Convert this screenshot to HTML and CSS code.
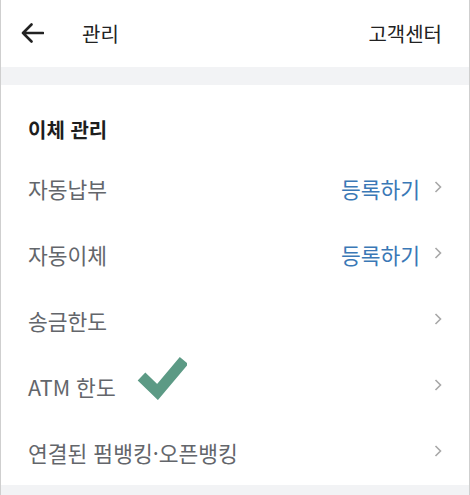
FILE: index.html
```html
<!DOCTYPE html>
<html lang="ko">
<head>
  <meta charset="UTF-8">
  <meta name="viewport" content="width=device-width, initial-scale=1.0">
  <title>관리</title>
  <link rel="stylesheet" href="styles.css">
</head>
<body>
  <div class="screen">
    <header class="topbar">
      <a href="#" class="back" aria-label="뒤로">
        <svg width="24" height="24" viewBox="0 0 24 24">
          <path d="M23 12H3M11.5 3.5L3 12l8.5 8.5" fill="none" stroke="#222" stroke-width="2.6" stroke-linecap="round" stroke-linejoin="round"/>
        </svg>
      </a>
      <span class="page-title">관리</span>
      <a href="#" class="help">고객센터</a>
    </header>

    <div class="divider"></div>

    <section class="menu">
      <h3 class="menu-title">이체 관리</h3>

      <a href="#" class="row">
        <span class="label">자동납부</span>
        <span class="action">등록하기</span>
        <svg class="chev" width="8" height="12" viewBox="0 0 8 12"><path d="M1.5 1l5 5-5 5" fill="none" stroke="#a8a8a8" stroke-width="1.6"/></svg>
      </a>
      <a href="#" class="row">
        <span class="label">자동이체</span>
        <span class="action">등록하기</span>
        <svg class="chev" width="8" height="12" viewBox="0 0 8 12"><path d="M1.5 1l5 5-5 5" fill="none" stroke="#a8a8a8" stroke-width="1.6"/></svg>
      </a>
      <a href="#" class="row">
        <span class="label">송금한도</span>
        <svg class="chev" width="8" height="12" viewBox="0 0 8 12"><path d="M1.5 1l5 5-5 5" fill="none" stroke="#a8a8a8" stroke-width="1.6"/></svg>
      </a>
      <a href="#" class="row">
        <span class="label">ATM 한도</span>
        <svg class="check" width="52" height="44" viewBox="0 0 52 44">
          <polyline points="6.5,20.5 22.5,36 49,4.5" fill="none" stroke="#5c9a85" stroke-width="11"/>
        </svg>
        <svg class="chev" width="8" height="12" viewBox="0 0 8 12"><path d="M1.5 1l5 5-5 5" fill="none" stroke="#a8a8a8" stroke-width="1.6"/></svg>
      </a>
      <a href="#" class="row">
        <span class="label">연결된 펌뱅킹·오픈뱅킹</span>
        <svg class="chev" width="8" height="12" viewBox="0 0 8 12"><path d="M1.5 1l5 5-5 5" fill="none" stroke="#a8a8a8" stroke-width="1.6"/></svg>
      </a>
    </section>

    <div class="divider bottom"></div>
  </div>
</body>
</html>
```

FILE: styles.css
```css
body {
  margin: 0;
  font-family: "Noto Sans CJK KR", "Noto Sans", sans-serif;
  background-color: white;
}
.screen {
  width: 470px;
  height: 495px;
  box-sizing: border-box;
  border-left: 1px solid #cfcfcf;
  border-right: 1px solid #cfcfcf;
  overflow: hidden;
}
.topbar {
  display: flex;
  align-items: center;
  height: 67px;
  padding: 0 27px 0 19px;
  color: #222;
  font-size: 20px;
}
.back {
  display: flex;
  width: 24px;
  height: 24px;
  margin-top: -2px;
}
.page-title {
  margin-left: 38px;
  flex: 1;
}
.help {
  text-decoration: none;
  color: #222;
}
.divider {
  height: 18px;
  background-color: #f2f3f5;
}
.divider.bottom {
  height: 20px;
}
.menu {
  padding: 0 27px;
}
.menu-title {
  margin: 0;
  padding: 31px 0 11px;
  line-height: 28px;
  font-size: 20px;
  font-weight: bold;
  color: #1e1e1e;
}
.row {
  display: flex;
  align-items: center;
  height: 66px;
  position: relative;
  text-decoration: none;
  font-size: 21.5px;
}
.label {
  flex: 1;
  color: #63666b;
}
.action {
  color: #3a78b6;
  margin-right: 14px;
}
.chev {
  margin-top: -2px;
}
.check {
  position: absolute;
  left: 107px;
  top: 3px;
}
```
